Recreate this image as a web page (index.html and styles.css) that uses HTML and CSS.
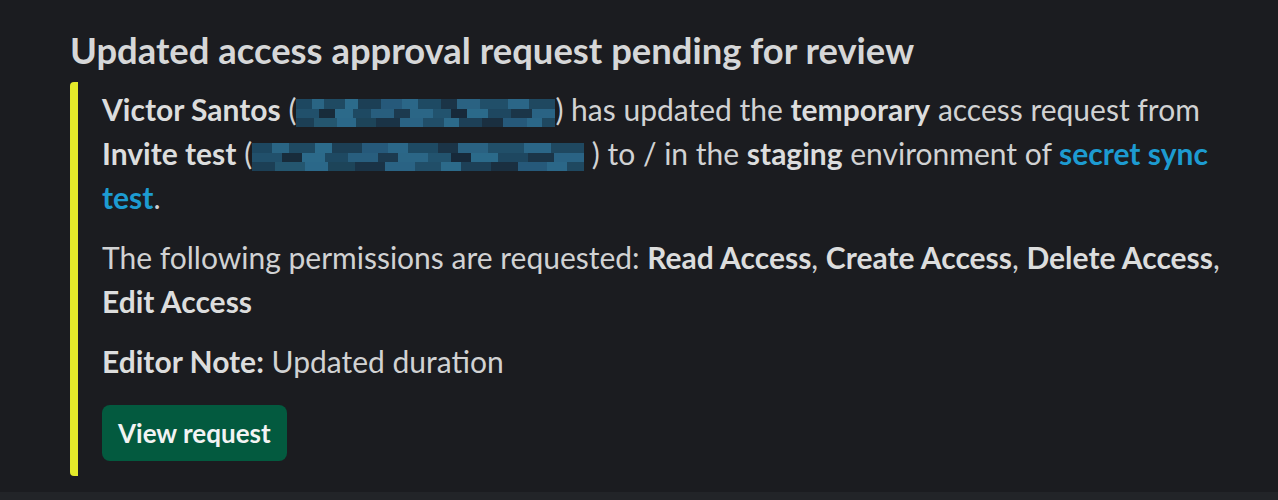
FILE: index.html
```html
<!DOCTYPE html>
<html lang="en">
<head>
    <meta charset="UTF-8">
    <title>Access request updated</title>
    <link rel="stylesheet" href="styles.css">
</head>
<body>
    <div class="message">
        <h2 class="title">Updated access approval request pending for review</h2>
        <div class="attachment">
            <p><b>Victor Santos</b> (<span class="redacted r1"></span>) has updated the <b>temporary</b> access request from <b>Invite test</b> (<span class="redacted r2"></span> ) to / in the <b>staging</b> environment of <a href="#">secret sync test</a>.</p>
            <p>The following permissions are requested: <b>Read Access</b>, <b>Create Access</b>, <b>Delete Access</b>, <b>Edit Access</b></p>
            <p><b>Editor Note:</b> Updated duration</p>
            <button class="btn">View request</button>
        </div>
    </div>
    <div class="footer-strip"></div>
</body>
</html>
```

FILE: styles.css
```css
html, body {
    margin: 0;
    padding: 0;
    background: #1b1c20;
}

body {
    font-family: Lato, "Noto Sans", sans-serif;
    color: #d1d2d3;
    height: 500px;
    display: flex;
    flex-direction: column;
}

.message {
    flex: 1;
    padding: 28px 40px 0 70px;
}

.title {
    margin: 0 0 10px;
    font-size: 36.4px;
    font-weight: 700;
    line-height: 44px;
    color: #d6d7d8;
}

.attachment {
    border-left: 8px solid #e3ea2a;
    border-radius: 4px;
    padding: 5px 8px 15px 24px;
}

.attachment p {
    margin: 0 0 16px;
    font-size: 30px;
    line-height: 44px;
}

.attachment b {
    font-weight: 700;
    color: #dcdddd;
}

.attachment a {
    color: #1d9bd1;
    font-weight: 700;
    text-decoration: none;
}

/* pixelated e-mail addresses */
.redacted {
    display: inline-block;
    height: 28px;
    vertical-align: -6px;
    background-color: #1f4359;
    background-repeat: no-repeat;
    background-size: 100% 10px, 100% 9px, 100% 9px;
    background-position: 0 0, 0 10px, 0 19px;
    background-image:
        linear-gradient(90deg, #1d4760 0 6%, #2a6584 6% 11%, #1f4a62 11% 19%, #2c6b8b 19% 24%, #1c3f55 24% 33%, #26597a 33% 41%, #2b6788 41% 47%, #1e4a63 47% 56%, #1b3447 56% 62%, #2a6282 62% 71%, #214f69 71% 82%, #2b6687 82% 90%, #1f4860 90% 100%),
        linear-gradient(90deg, #21506b 0 9%, #182c3b 9% 15%, #2c6a8a 15% 22%, #1e4962 22% 29%, #285e7e 29% 38%, #1c3a4f 38% 44%, #2b6686 44% 53%, #22536e 53% 60%, #17293a 60% 66%, #2b6a8a 66% 74%, #1e4760 74% 83%, #1b3548 83% 91%, #2a6384 91% 100%),
        linear-gradient(90deg, #1c3f55 0 7%, #24566f 7% 16%, #2b6889 16% 23%, #1d4459 23% 31%, #1a3346 31% 40%, #2a6384 40% 49%, #214e68 49% 57%, #2c6a8a 57% 63%, #1d4057 63% 72%, #1a2f40 72% 80%, #26597a 80% 89%, #2b6788 89% 95%, #1f4860 95% 100%);
}

.r1 {
    width: 259px;
}

.r2 {
    width: 332px;
}

.btn {
    display: block;
    margin-top: 22px;
    height: 56px;
    padding: 0 16px;
    background: #035a3f;
    color: #f2f3f3;
    border: none;
    border-radius: 8px;
    font-family: Lato, "Noto Sans", sans-serif;
    font-size: 26px;
    font-weight: 700;
}

.footer-strip {
    height: 8px;
    background: #222428;
}
```
